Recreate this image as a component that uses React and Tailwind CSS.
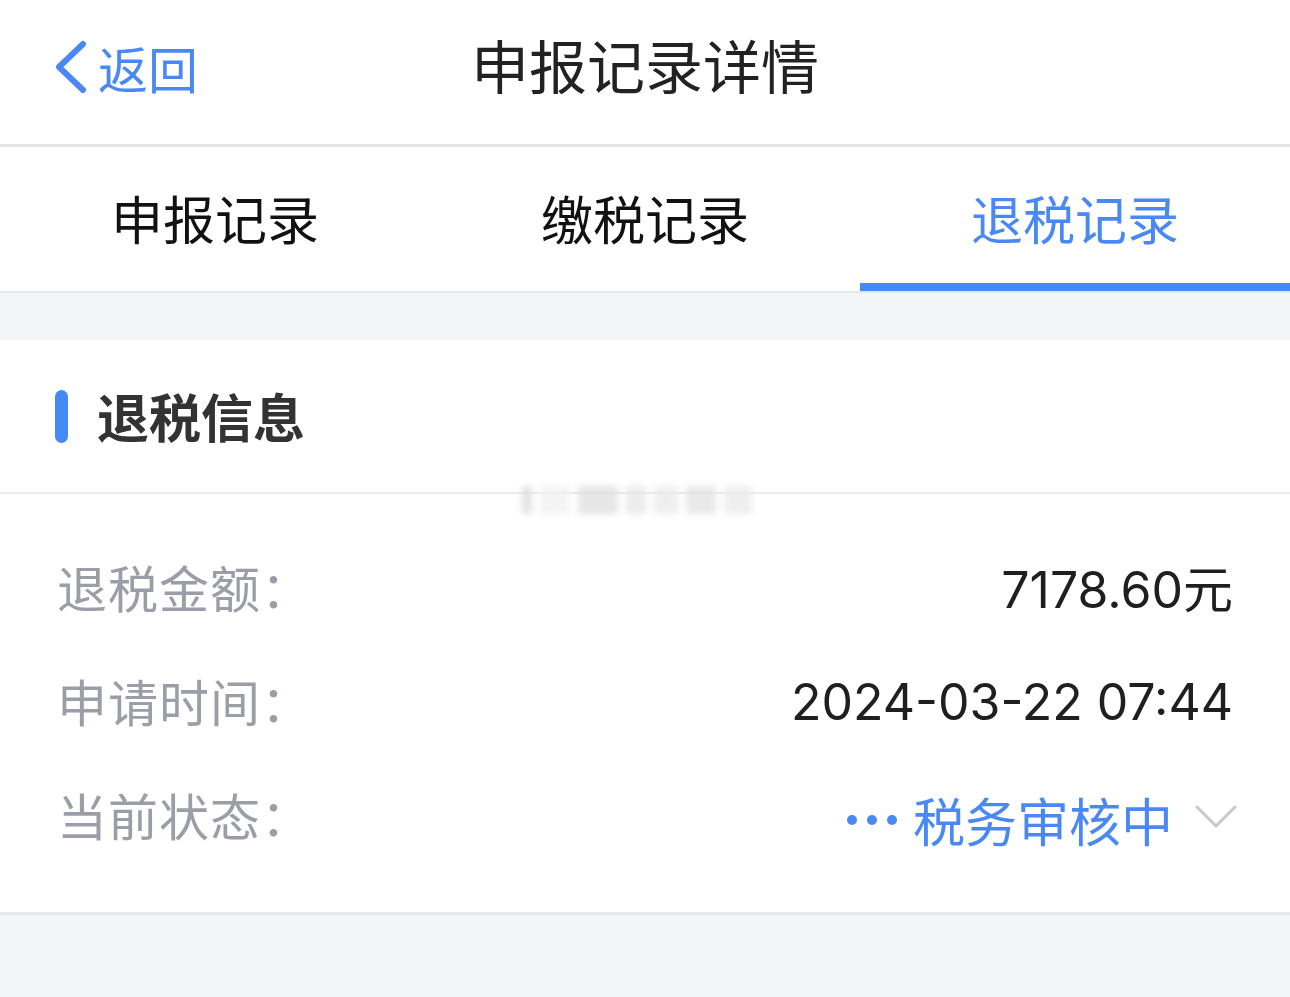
import React from 'react';

const cjk = { fontFamily: '"Noto Sans CJK SC", "Noto Sans", sans-serif' };
const num = { fontFamily: 'Inter, "Noto Sans CJK SC", sans-serif' };

const tabs = ['申报记录', '缴税记录', '退税记录'];

const InfoRow = ({ label, children }) => (
  <div className="flex items-center justify-between h-[114px]">
    <span className="text-[50px] text-[#9b9ea6] leading-none tracking-[1px]">{label}：</span>
    {children}
  </div>
);

export default function App() {
  return (
    <div className="w-[1290px] h-[997px] bg-[#f4f5f8] overflow-hidden" style={cjk}>
      {/* 顶部导航 */}
      <div className="relative h-[147px] bg-white border-b-[3px] border-[#e4e5ea] flex items-center justify-center pb-[16px]">
        <button className="absolute left-[52px] top-[40px] flex items-center gap-[10px] text-[#4a89f3]">
          <svg width="36" height="54" viewBox="0 0 36 54" fill="none">
            <path d="M31 4 L7 27 L31 50" stroke="#4a89f3" strokeWidth="6" strokeLinecap="round" strokeLinejoin="round" />
          </svg>
          <span className="text-[50px] leading-none">返回</span>
        </button>
        <h1 className="text-[58px] text-[#222] leading-none">申报记录详情</h1>
      </div>

      {/* 标签 */}
      <div className="h-[146px] bg-white border-b-[2px] border-[#e6e7ec] grid grid-cols-3">
        {tabs.map((t, i) => (
          <div key={t} className="relative flex items-center justify-center pb-[2px]">
            <span className={`text-[52px] leading-none ${i === 2 ? 'text-[#4a89f3]' : 'text-[#111]'}`}>{t}</span>
            {i === 2 && <div className="absolute left-0 right-0 bottom-0 h-[8px] bg-[#4589f5]" />}
          </div>
        ))}
      </div>

      <div className="h-[47px]" />

      {/* 退税信息卡片 */}
      <div className="bg-white border-b-[3px] border-[#e6e7ec]">
        <div className="relative h-[154px] flex items-center px-[55px] border-b-[2px] border-[#ececef]">
          <div className="w-[13px] h-[53px] rounded-full bg-[#4589f5] mr-[29px]" />
          <span className="text-[52px] font-bold text-[#333] leading-none">退税信息</span>
          <div className="absolute left-[522px] top-[146px] w-[246px] h-[28px] flex gap-[8px] opacity-70 blur-[3px]">
            <div className="w-[10px] bg-[#d8d8d8]" />
            <div className="w-[30px] bg-[#f0f0f0]" />
            <div className="w-[40px] bg-[#dcdcdc]" />
            <div className="w-[20px] bg-[#e4e4e4]" />
            <div className="w-[24px] bg-[#e8e8e8]" />
            <div className="w-[30px] bg-[#e0e0e0]" />
            <div className="w-[28px] bg-[#e8e8e8]" />
          </div>
        </div>

        <div className="px-[57px] pt-[35px] pb-[41px]">
          <InfoRow label="退税金额">
            <span className="text-[50px] text-[#1f1f1f] leading-none pt-[4px]" style={num}>
              7178.60<span style={cjk}>元</span>
            </span>
          </InfoRow>
          <InfoRow label="申请时间">
            <span className="text-[50px] text-[#1f1f1f] leading-none pt-[4px]" style={num}>2024-03-22 07:44</span>
          </InfoRow>
          <InfoRow label="当前状态">
            <div className="flex items-center pt-[12px] -mr-[4px]">
              <div className="flex items-center gap-[10px] mr-[16px]">
                <span className="w-[10px] h-[10px] rounded-full bg-[#4a89f3]" />
                <span className="w-[10px] h-[10px] rounded-full bg-[#4a89f3]" />
                <span className="w-[10px] h-[10px] rounded-full bg-[#4a89f3]" />
              </div>
              <span className="text-[52px] text-[#4a89f3] leading-none">税务审核中</span>
              <svg className="ml-[22px] -mt-[6px]" width="42" height="26" viewBox="0 0 42 26" fill="none">
                <path d="M2 3 L21 22 L40 3" stroke="#c8c8cc" strokeWidth="3" strokeLinecap="round" strokeLinejoin="round" />
              </svg>
            </div>
          </InfoRow>
        </div>
      </div>
    </div>
  );
}
